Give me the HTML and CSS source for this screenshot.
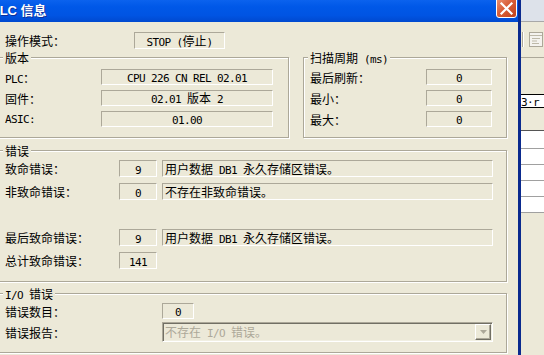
FILE: index.html
```html
<!DOCTYPE html>
<html lang="zh-CN">

<head>
    <meta charset="utf-8">
    <title>PLC 信息</title>
    <link rel="stylesheet" href="styles.css">
</head>

<body>
    <div class="screen">
        <div class="dialog">
            <div class="titlebar">
                <span class="title">PLC 信息</span>
                <span class="close">
                    <svg width="19" height="19" viewBox="0 0 19 19">
                        <path d="M4.5 5.5 L14.5 15.5 M14.5 5.5 L4.5 15.5" stroke="#fff" stroke-width="2.2" stroke-linecap="square" fill="none" />
                    </svg>
                </span>
            </div>

            <div class="content">
                <div class="mode-row">
                    <span class="mode-label">操作模式：</span>
                    <div class="field mode"><span class="a">STOP (</span>停止<span class="a">)</span></div>
                </div>

                <div class="top-groups">
                    <div class="group version">
                        <span class="group-title">版本</span>
                        <div class="rows">
                            <span><span class="a">PLC</span>：</span>
                            <div class="field"><span class="a">CPU 226 CN REL 02.01</span></div>
                            <span>固件：</span>
                            <div class="field"><span class="a">02.01 </span>版本<span class="a"> 2</span></div>
                            <span class="a">ASIC:</span>
                            <div class="field"><span class="a">01.00</span></div>
                        </div>
                    </div>

                    <div class="group scan">
                        <span class="group-title">扫描周期<span class="a"> (ms)</span></span>
                        <div class="rows">
                            <span>最后刷新：</span>
                            <div class="field"><span class="a">0</span></div>
                            <span>最小：</span>
                            <div class="field"><span class="a">0</span></div>
                            <span>最大：</span>
                            <div class="field"><span class="a">0</span></div>
                        </div>
                    </div>
                </div>

                <div class="group errors">
                    <span class="group-title">错误</span>
                    <div class="rows">
                        <span>致命错误：</span>
                        <div class="field"><span class="a">9</span></div>
                        <div class="field desc">用户数据<span class="a"> DB1 </span>永久存储区错误。</div>

                        <span>非致命错误：</span>
                        <div class="field"><span class="a">0</span></div>
                        <div class="field desc">不存在非致命错误。</div>

                        <div class="spacer"></div>

                        <span>最后致命错误：</span>
                        <div class="field"><span class="a">9</span></div>
                        <div class="field desc">用户数据<span class="a"> DB1 </span>永久存储区错误。</div>

                        <span>总计致命错误：</span>
                        <div class="field"><span class="a">141</span></div>
                    </div>
                </div>

                <div class="group io">
                    <span class="group-title"><span class="a">I/O </span>错误</span>
                    <div class="rows">
                        <span>错误数目：</span>
                        <div class="field count"><span class="a">0</span></div>
                        <span>错误报告：</span>
                        <div class="combo">
                            <span class="combo-text">不存在<span class="a"> I/O </span>错误。</span>
                            <span class="combo-btn">
                                <svg width="7" height="4" viewBox="0 0 7 4">
                                    <path d="M0 0 H7 L3.5 4 Z" fill="#aca899" />
                                </svg>
                            </span>
                        </div>
                    </div>
                </div>
            </div>
        </div>

        <div class="edge"></div>

        <div class="backdrop">
            <div class="bd-caption"></div>
            <div class="bd-toolbar">
                <span class="bd-sep"></span>
                <svg width="14" height="15" viewBox="0 0 14 15">
                    <rect x="0.5" y="0.5" width="13" height="14" fill="#f4f3ee" stroke="#aca899" />
                    <path d="M1 3.5 H13 M3 6.5 H11 M3 9 H8 M3 11.5 H10" stroke="#bdb9a8" fill="none" />
                </svg>
            </div>
            <div class="bd-gap"></div>
            <div class="bd-input"><span class="a">3·r</span></div>
            <div class="bd-gap2"></div>
            <div class="bd-list">
                <div class="bd-row first"></div>
                <div class="bd-row"></div>
                <div class="bd-row"></div>
                <div class="bd-row"></div>
                <div class="bd-row"></div>
            </div>
        </div>
    </div>
</body>

</html>
```

FILE: styles.css
```css
:root {
    font-family: "Noto Sans CJK SC", sans-serif;
    font-size: 12px;
    color: #000;
}

body {
    margin: 0;
    background: #ece9d8;
}

.screen {
    display: flex;
    width: 544px;
    height: 355px;
    overflow: hidden;
}

/* latin runs: narrow monospace, 6px per char */
.a {
    font-family: "DejaVu Sans Mono", monospace;
    font-size: 11px;
    letter-spacing: -0.62px;
}

.dialog {
    flex: none;
    width: 518px;
    background: #ece9d8;
    overflow: hidden;
}

.titlebar {
    display: flex;
    align-items: flex-start;
    height: 22px;
    background: linear-gradient(#0b62ee 0, #0058e8 30%, #0054e3 70%, #0049cf 100%);
}

.title {
    margin-left: -9px;
    font: bold 13px/22px "Liberation Sans", "Noto Sans CJK SC", sans-serif;
    color: #fff;
    text-shadow: 1px 1px 0 #0c2f9a;
    white-space: nowrap;
}

.close {
    display: flex;
    box-sizing: border-box;
    width: 21px;
    height: 21px;
    margin: -3px 1px 0 auto;
    border: 1px solid #fff;
    border-radius: 3px;
    background: linear-gradient(135deg, #ec9577 0, #d9603a 45%, #c1411a 100%);
}

.content {
    padding-top: 10px;
}

.mode-row {
    display: flex;
    align-items: center;
    height: 17px;
    padding-left: 5px;
}

.mode-label {
    width: 129px;
}

.field {
    box-sizing: border-box;
    height: 16px;
    line-height: 14px;
    border: 1px solid;
    border-color: #aca899 #fff #fff #aca899;
    text-align: center;
    white-space: nowrap;
    overflow: hidden;
}

.mode {
    width: 91px;
    height: 17px;
    line-height: 15px;
}

.top-groups {
    display: flex;
    gap: 14px;
    margin: 8px 0 0 -2px;
}

.group {
    border: 1px solid #aca899;
    box-shadow: inset 1px 1px 0 #fff, 1px 1px 0 #fff;
}

.group-title {
    display: block;
    width: max-content;
    height: 13px;
    line-height: 13px;
    margin: -7px 0 0 -2px;
    padding: 0 2px;
    background: #ece9d8;
    white-space: nowrap;
}

.rows {
    display: grid;
    align-items: center;
    white-space: nowrap;
}

.version {
    padding: 0 15px 10px 6px;
}

.scan {
    padding: 0 14px 10px 6px;
}

.version .rows,
.scan .rows {
    margin-top: 5px;
    row-gap: 5px;
    grid-auto-rows: 16px;
}

.version .rows {
    grid-template-columns: 96px 172px;
}

.scan .rows {
    grid-template-columns: 116px 66px;
}

.errors,
.io {
    box-sizing: border-box;
    width: 509px;
    margin-left: -2px;
}

.errors {
    margin-top: 12px;
    padding: 0 13px 12px 6px;
}

.errors .rows {
    margin-top: 3px;
    grid-template-columns: 109px 38px 331px;
    grid-auto-rows: 17px;
    column-gap: 5px;
    row-gap: 6px;
}

.errors .field {
    height: 17px;
    line-height: 15px;
}

.field.desc {
    text-align: left;
    padding-left: 2px;
}

.spacer {
    grid-column: 1 / -1;
}

.io {
    margin-top: 11px;
    padding: 0 13px 10px 6px;
}

.io .rows {
    margin-top: 3px;
    grid-template-columns: 157px 331px;
    grid-template-rows: 16px 20px;
    row-gap: 3px;
}

.count {
    width: 32px;
}

.combo {
    display: flex;
    box-sizing: border-box;
    height: 20px;
    padding: 1px;
    border: 1px solid;
    border-color: #aca899 #fff #fff #aca899;
    box-shadow: inset 1px 1px 0 #716f64, inset -1px -1px 0 #f1efe2;
}

.combo-text {
    flex: 1;
    padding-left: 1px;
    line-height: 16px;
    color: #aca899;
}

.combo-btn {
    display: flex;
    align-items: center;
    justify-content: center;
    box-sizing: border-box;
    width: 16px;
    height: 16px;
    border: 1px solid;
    border-color: #fff #716f64 #716f64 #fff;
    box-shadow: inset -1px -1px 0 #aca899;
    background: #ece9d8;
}

.edge {
    flex: none;
    width: 3px;
    background: #0a2a8e;
}

.backdrop {
    flex: 1;
    display: flex;
    flex-direction: column;
    background: #ece9d8;
}

.bd-caption {
    height: 21px;
    background: #dde2ea;
    border-bottom: 1px solid #a8a8a8;
}

.bd-toolbar {
    display: flex;
    align-items: center;
    gap: 6px;
    height: 35px;
    border-bottom: 1px solid #aca899;
}

.bd-sep {
    width: 1px;
    height: 15px;
    margin-left: 1px;
    background: #aca899;
    box-shadow: 1px 0 0 #fff;
}

.bd-gap {
    height: 36px;
}

.bd-input {
    height: 12px;
    line-height: 12px;
    border-top: 1px solid #000;
    border-bottom: 1px solid #000;
    background: #fff;
    white-space: nowrap;
    overflow: hidden;
}

.bd-gap2 {
    height: 22px;
    border-bottom: 1px solid #555;
}

.bd-list {
    background: #fff;
}

.bd-row {
    height: 15px;
    border-bottom: 1px solid #a0a0a0;
}

.bd-row.first {
    height: 17px;
}
```
